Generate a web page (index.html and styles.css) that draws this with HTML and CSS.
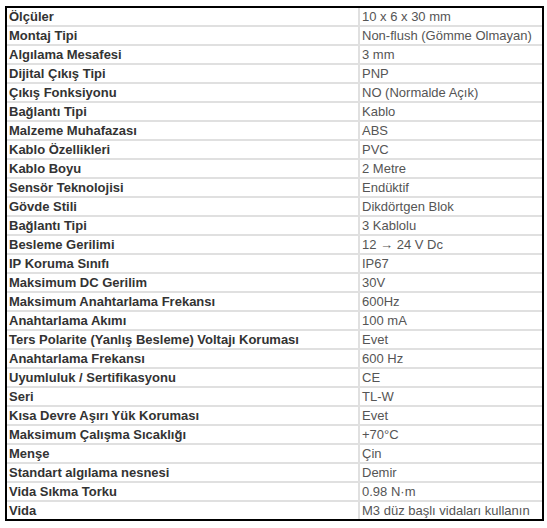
FILE: index.html
```html
<!DOCTYPE html>
<html lang="tr">
<head>
<meta charset="utf-8">
<title>Özellikler</title>
<link rel="stylesheet" href="styles.css">
</head>
<body>
<table class="spec">
<tbody>
<tr><th>Ölçüler</th><td>10 x 6 x 30 mm</td></tr>
<tr><th>Montaj Tipi</th><td>Non-flush (Gömme Olmayan)</td></tr>
<tr><th>Algılama Mesafesi</th><td>3 mm</td></tr>
<tr><th>Dijital Çıkış Tipi</th><td>PNP</td></tr>
<tr><th>Çıkış Fonksiyonu</th><td>NO (Normalde Açık)</td></tr>
<tr><th>Bağlantı Tipi</th><td>Kablo</td></tr>
<tr><th>Malzeme Muhafazası</th><td>ABS</td></tr>
<tr><th>Kablo Özellikleri</th><td>PVC</td></tr>
<tr><th>Kablo Boyu</th><td>2 Metre</td></tr>
<tr><th>Sensör Teknolojisi</th><td>Endüktif</td></tr>
<tr><th>Gövde Stili</th><td>Dikdörtgen Blok</td></tr>
<tr><th>Bağlantı Tipi</th><td>3 Kablolu</td></tr>
<tr><th>Besleme Gerilimi</th><td>12 → 24 V Dc</td></tr>
<tr><th>IP Koruma Sınıfı</th><td>IP67</td></tr>
<tr><th>Maksimum DC Gerilim</th><td>30V</td></tr>
<tr><th>Maksimum Anahtarlama Frekansı</th><td>600Hz</td></tr>
<tr><th>Anahtarlama Akımı</th><td>100 mA</td></tr>
<tr><th>Ters Polarite (Yanlış Besleme) Voltajı Koruması</th><td>Evet</td></tr>
<tr><th>Anahtarlama Frekansı</th><td>600 Hz</td></tr>
<tr><th>Uyumluluk / Sertifikasyonu</th><td>CE</td></tr>
<tr><th>Seri</th><td>TL-W</td></tr>
<tr><th>Kısa Devre Aşırı Yük Koruması</th><td>Evet</td></tr>
<tr><th>Maksimum Çalışma Sıcaklığı</th><td>+70°C</td></tr>
<tr><th>Menşe</th><td>Çin</td></tr>
<tr><th>Standart algılama nesnesi</th><td>Demir</td></tr>
<tr><th>Vida Sıkma Torku</th><td>0.98 N·m</td></tr>
<tr><th>Vida</th><td>M3 düz başlı vidaları kullanın</td></tr>
</tbody>
</table>
</body>
</html>
```
FILE: styles.css
```css
html, body {
  margin: 0;
  padding: 0;
  background: #ffffff;
}
body {
  padding: 6px 3px 0 5px;
  font-family: "Liberation Sans", Arial, sans-serif;
}
.spec {
  width: 539px;
  border: 2px solid #000;
  border-collapse: separate;
  border-spacing: 0;
  table-layout: fixed;
}
.spec th, .spec td {
  height: 17px;
  padding: 0 0 0 2px;
  font-size: 13px;
  line-height: 17px;
  text-align: left;
  vertical-align: middle;
  white-space: nowrap;
  overflow: hidden;
  border-bottom: 2px solid #e0e0e0;
}
.spec tr:last-child th, .spec tr:last-child td {
  border-bottom: 0;
}
.spec th {
  width: 349px;
  font-weight: bold;
  color: #333;
  border-right: 2px solid #e0e0e0;
}
.spec td {
  color: #555;
}
```
